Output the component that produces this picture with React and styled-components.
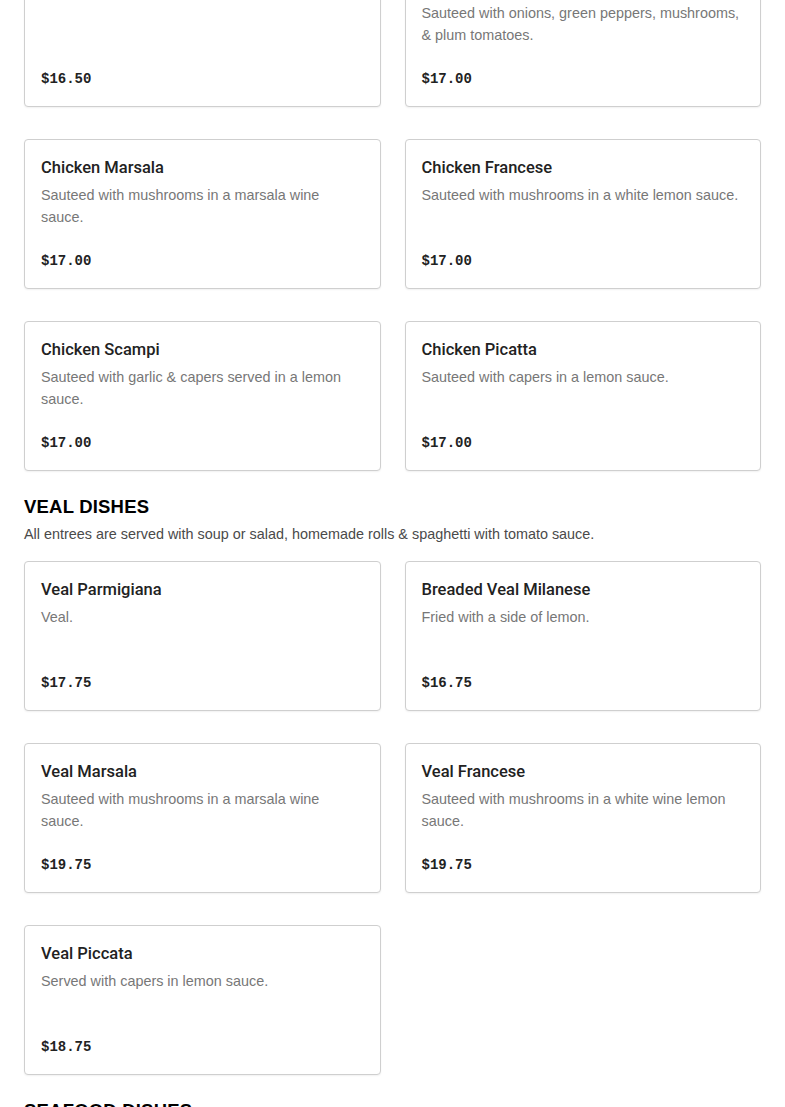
import styled, { createGlobalStyle } from 'styled-components';

const GlobalStyle = createGlobalStyle`
  body {
    margin: 0;
    background: #fff;
    font-family: "Liberation Sans", Arial, sans-serif;
  }
`;

const Page = styled.div`
  padding: 0 24px 40px;
  margin-top: -43px;
`;

const Section = styled.section`
  & + & {
    margin-top: 24px;
  }
`;

const SectionTitle = styled.h2`
  margin: 0;
  font-size: 18.5px;
  line-height: 24px;
  font-weight: 900;
  color: #000;
  letter-spacing: 0.2px;
`;

const SectionNote = styled.p`
  margin: 4px 0 16px;
  font-size: 14.4px;
  line-height: 22px;
  color: #4a4a4a;
`;

const Grid = styled.div`
  display: grid;
  grid-template-columns: 1fr 1fr;
  column-gap: 24px;
  row-gap: 32px;
`;

const Card = styled.div`
  box-sizing: border-box;
  display: flex;
  flex-direction: column;
  height: 150px;
  padding: 16px 16px 17px;
  border: 1px solid #cfcfcf;
  border-radius: 4px;
  background: #fff;
  box-shadow: 0 1px 2px rgba(0, 0, 0, 0.06);
`;

const ItemName = styled.h3`
  margin: 0;
  font-family: Roboto, "Liberation Sans", Arial, sans-serif;
  font-size: 16.5px;
  line-height: 24px;
  font-weight: 500;
  color: #222;
`;

const ItemDesc = styled.p`
  margin: 4px 0 0;
  font-size: 14.4px;
  line-height: 22px;
  color: #777;
`;

const Price = styled.div`
  margin-top: auto;
  font-family: "Liberation Mono", "Courier New", monospace;
  font-size: 14px;
  line-height: 20px;
  font-weight: 700;
  color: #222;
`;

const sections = [
  {
    items: [
      { name: 'Chicken Parmigiana', desc: '', price: '$16.50' },
      {
        name: 'Chicken Cacciatore',
        desc: 'Sauteed with onions, green peppers, mushrooms, & plum tomatoes.',
        price: '$17.00',
      },
      { name: 'Chicken Marsala', desc: 'Sauteed with mushrooms in a marsala wine sauce.', price: '$17.00' },
      { name: 'Chicken Francese', desc: 'Sauteed with mushrooms in a white lemon sauce.', price: '$17.00' },
      { name: 'Chicken Scampi', desc: 'Sauteed with garlic & capers served in a lemon sauce.', price: '$17.00' },
      { name: 'Chicken Picatta', desc: 'Sauteed with capers in a lemon sauce.', price: '$17.00' },
    ],
  },
  {
    title: 'VEAL DISHES',
    note: 'All entrees are served with soup or salad, homemade rolls & spaghetti with tomato sauce.',
    items: [
      { name: 'Veal Parmigiana', desc: 'Veal.', price: '$17.75' },
      { name: 'Breaded Veal Milanese', desc: 'Fried with a side of lemon.', price: '$16.75' },
      { name: 'Veal Marsala', desc: 'Sauteed with mushrooms in a marsala wine sauce.', price: '$19.75' },
      { name: 'Veal Francese', desc: 'Sauteed with mushrooms in a white wine lemon sauce.', price: '$19.75' },
      { name: 'Veal Piccata', desc: 'Served with capers in lemon sauce.', price: '$18.75' },
    ],
  },
  {
    title: 'SEAFOOD DISHES',
    note: 'All entrees are served with soup or salad, homemade rolls & spaghetti with tomato sauce.',
    items: [],
  },
];

const App = () => {
  return (
    <>
      <GlobalStyle />
      <Page>
        {sections.map((sec, i) => (
          <Section key={i}>
            {sec.title && <SectionTitle>{sec.title}</SectionTitle>}
            {sec.note && <SectionNote>{sec.note}</SectionNote>}
            <Grid>
              {sec.items.map((item) => (
                <Card key={item.name}>
                  <ItemName>{item.name}</ItemName>
                  {item.desc && <ItemDesc>{item.desc}</ItemDesc>}
                  <Price>{item.price}</Price>
                </Card>
              ))}
            </Grid>
          </Section>
        ))}
      </Page>
    </>
  );
};

export default App;
